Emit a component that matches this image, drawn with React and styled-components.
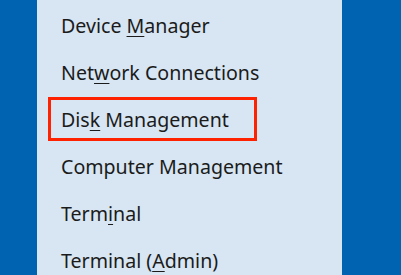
import React from "react";
import styled, { createGlobalStyle } from "styled-components";

const Global = createGlobalStyle`
  html, body { margin: 0; padding: 0; }
  body { background: #0063b1; width: 401px; height: 275px; overflow: hidden; }
`;

const Desk = styled.div`
  width: 401px;
  height: 275px;
  background: #0063b1;
  display: flex;
  overflow: hidden;
`;

const Panel = styled.div`
  margin-left: 37px;
  width: 305px;
  height: 275px;
  background: #d7e6f2;
  display: flex;
  flex-direction: column;
  padding-top: 2px;
  box-sizing: border-box;
  overflow: hidden;
`;

const Item = styled.div`
  height: 47px;
  flex-shrink: 0;
  display: flex;
  align-items: center;
  padding-left: 24px;
  font-family: "Noto Sans", "Open Sans", sans-serif;
  font-size: 19.6px;
  color: #1b1b1b;
  white-space: pre;
  position: relative;
`;

const Label = styled.span`
  white-space: pre;
`;

const Key = styled.span`
  text-decoration: underline;
  text-underline-offset: 3px;
  text-decoration-thickness: 1px;
`;

const Highlight = styled.div`
  position: absolute;
  left: 11px;
  top: 1px;
  width: 209px;
  height: 44px;
  border: 3px solid #ff2200;
  box-sizing: border-box;
`;

const items = [
  ["Device ", "M", "anager"],
  ["Net", "w", "ork Connections"],
  ["Dis", "k", " Management", true],
  ["Computer Management", "", ""],
  ["Term", "i", "nal"],
  ["Terminal (", "A", "dmin)"],
];

export default function App() {
  return (
    <>
      <Global />
      <Desk>
        <Panel>
          {items.map(([a, k, b, hl], i) => (
            <Item key={i}>
              <Label>
                {a}
                {k && <Key>{k}</Key>}
                {b}
              </Label>
              {hl && <Highlight />}
            </Item>
          ))}
        </Panel>
      </Desk>
    </>
  );
}
